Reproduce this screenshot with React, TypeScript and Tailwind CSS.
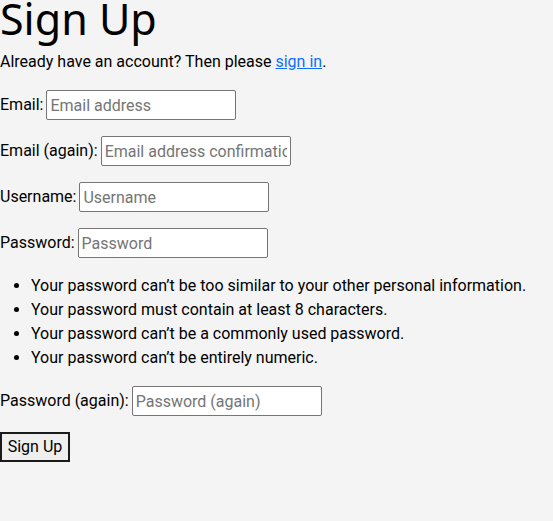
export default function App() {
  const fields = [
    { label: "Email:", placeholder: "Email address", type: "email" },
    { label: "Email (again):", placeholder: "Email address confirmation", type: "email" },
    { label: "Username:", placeholder: "Username", type: "text" },
    { label: "Password:", placeholder: "Password", type: "password" },
  ];

  const input =
    "h-[30px] w-[190px] rounded-[2px] border border-[#767676] bg-white px-[3px] text-[16px] text-black outline-none placeholder:text-[#757575]";

  return (
    <div className="min-h-screen bg-[#f4f4f4] font-['Roboto',sans-serif] text-[16px] text-black">
      <h1 className="h-[50px] text-[43px] leading-[38px] font-['Noto_Sans','Lato',sans-serif]">
        Sign Up
      </h1>
      <p className="leading-6">
        Already have an account? Then please{" "}
        <a href="#" className="text-[#0d6efd] underline">
          sign in
        </a>
        .
      </p>

      <form onSubmit={(e) => e.preventDefault()}>
        {fields.map((f) => (
          <div key={f.label} className="mt-4 flex h-[30px] items-center gap-[3px]">
            <label>{f.label}</label>
            <input type={f.type} placeholder={f.placeholder} className={input} />
          </div>
        ))}

        <ul className="mt-4 list-disc pl-[31px] leading-6">
          <li>Your password can’t be too similar to your other personal information.</li>
          <li>Your password must contain at least 8 characters.</li>
          <li>Your password can’t be a commonly used password.</li>
          <li>Your password can’t be entirely numeric.</li>
        </ul>

        <div className="mt-4 flex h-[30px] items-center gap-[3px]">
          <label>Password (again):</label>
          <input type="password" placeholder="Password (again)" className={input} />
        </div>

        <button
          type="submit"
          className="mt-4 h-[30px] w-[70px] border-2 border-[#1a1a1a] bg-[#efefef] text-[16px]"
        >
          Sign Up
        </button>
      </form>
    </div>
  );
}
